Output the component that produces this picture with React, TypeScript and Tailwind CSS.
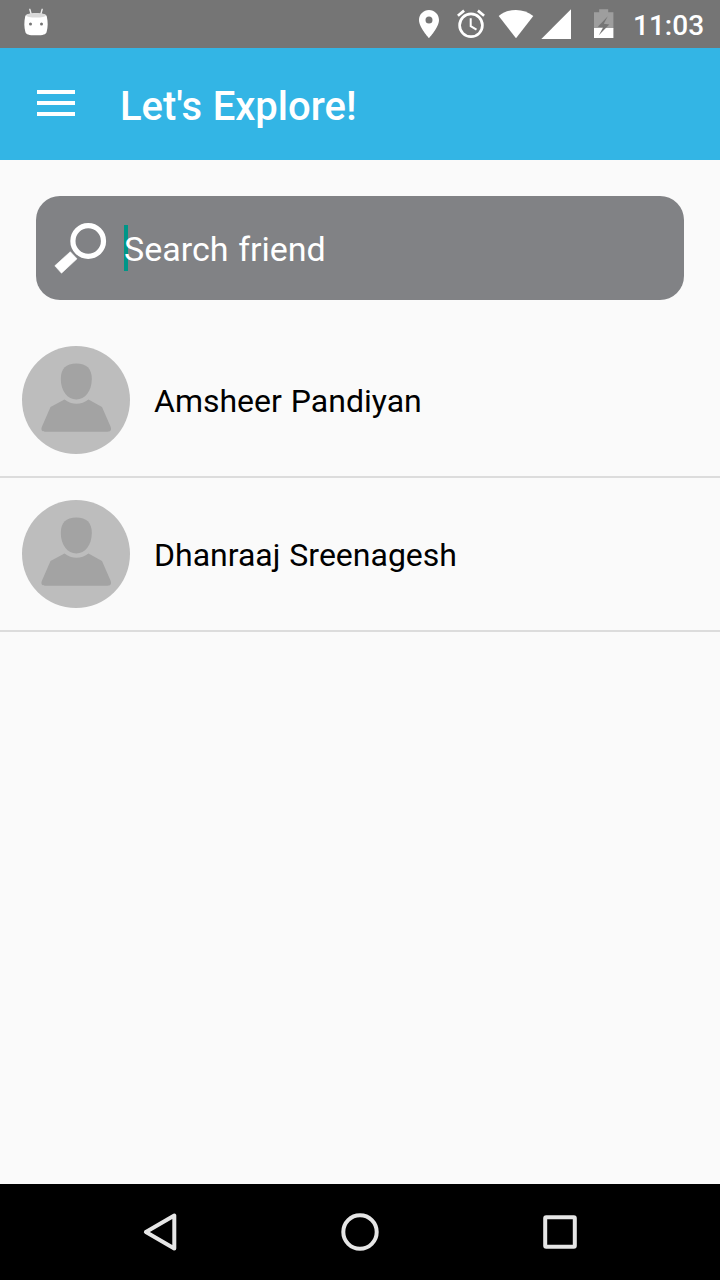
import React from 'react';

const friends = [
  { id: 1, name: 'Amsheer Pandiyan' },
  { id: 2, name: 'Dhanraaj Sreenagesh' },
];

const StatusBar: React.FC = () => (
  <div className="flex h-12 shrink-0 items-center bg-[#757575] text-white">
    {/* cyanogen notification */}
    <svg className="h-12 w-[72px]" viewBox="0 0 72 48">
      <path d="M29.8 9.3 31 13.5M42.2 9.3 41 13.5" stroke="#fff" strokeOpacity=".85" strokeWidth="1.4" strokeLinecap="round" />
      <path
        d="M25.2 16.5C25.2 12.2 46.8 12.2 46.8 16.5 48 22 48 27 46.6 32 45.8 34.6 43.5 35.3 36 35.3S26.2 34.6 25.4 32C24 27 24 22 25.2 16.5Z"
        fill="#fff"
      />
      <ellipse cx="36" cy="15.4" rx="10" ry="2.2" fill="#d9d9d9" />
      <circle cx="30.5" cy="24" r="1.5" fill="#757575" />
      <circle cx="41.5" cy="24" r="1.5" fill="#757575" />
    </svg>
    <div className="ml-auto flex items-center">
      <svg className="h-12 w-[38px]" viewBox="410 0 38 48">
        <path
          d="M429 10c-5.5 0-10 4.4-10 9.9C419 27.3 429 38 429 38s10-10.7 10-18.1c0-5.5-4.5-9.9-10-9.9zm0 13.4a3.5 3.5 0 1 1 0-7 3.5 3.5 0 0 1 0 7z"
          fill="#fff"
        />
      </svg>
      <svg className="h-12 w-[46px]" viewBox="448 0 46 48" fill="none" stroke="#fff">
        <circle cx="471" cy="25.3" r="11.4" strokeWidth="2.7" />
        <path d="M470.7 18.3V26.2L476.5 29.6" strokeWidth="2" />
        <path d="M457.9 15.8 464.1 10.6M484.1 15.8 477.9 10.6" strokeWidth="2.7" />
      </svg>
      <svg className="h-12 w-11" viewBox="494 0 44 48">
        <path d="M516 38.2 498.7 15.9C503.6 12 509.5 9.9 516 9.9S528.4 12 533.3 15.9Z" fill="#fff" />
      </svg>
      <svg className="h-12 w-[42px]" viewBox="538 0 42 48">
        <path d="M541.3 39H571V9.3Z" fill="#fff" />
      </svg>
      <svg className="h-12 w-[46px]" viewBox="580 0 46 48">
        <path d="M594 12.2h5.2V9.2h9v3h5.2V28.5H594z" fill="#9e9e9e" />
        <path d="M594 28h19.4v10H594z" fill="#fff" />
        <path d="M607.8 16.2 597.8 26.7 603.2 27.3 598.8 35.3 609.3 24.5 603.8 23.8Z" fill="#757575" />
      </svg>
      <span className="mt-[3px] w-[94px] pl-[7px] text-[28px] leading-none font-medium">11:03</span>
    </div>
  </div>
);

const AppBar: React.FC = () => (
  <header className="flex h-28 shrink-0 items-center bg-[#33b5e5] text-white">
    <button className="mb-[2px] ml-[37px] flex w-[38px] flex-col gap-[7px]" aria-label="Menu">
      <span className="h-1 w-full bg-white" />
      <span className="h-1 w-full bg-white" />
      <span className="h-1 w-full bg-white" />
    </button>
    <h1 className="mt-[5px] ml-[45px] text-[40px] leading-none font-medium [word-spacing:0.7px]">Let's Explore!</h1>
  </header>
);

const SearchBox: React.FC = () => (
  <div className="mx-9 mt-9 flex h-26 shrink-0 items-center rounded-[24px] bg-[#818285]">
    <svg className="ml-[18px] h-14 w-[70px]" viewBox="54 220 70 56">
      <circle cx="88.2" cy="241" r="15.3" fill="none" stroke="#fff" strokeWidth="5.2" />
      <path d="M70.3 251.7 77 258.8 61.5 273.2 54.8 265.8Z" fill="#fff" stroke="#fff" strokeWidth=".6" strokeLinejoin="round" />
    </svg>
    <div className="flex h-[46px] items-center">
      <span className="-mr-1 h-[46px] w-1 bg-[#009688]" />
      <span className="relative mt-px text-[34px] leading-none text-white [word-spacing:1.3px]">Search friend</span>
    </div>
  </div>
);

const Avatar: React.FC = () => (
  <svg className="size-[108px] shrink-0" viewBox="0 0 108 108">
    <circle cx="54" cy="54" r="54" fill="#bdbdbd" />
    <g fill="#a3a3a3">
      <path d="M54.3 17.5C64.5 17.5 69.8 22.5 69.8 33 69.8 45 63 53.5 54.3 53.5S38.8 45 38.8 33C38.8 22.5 44 17.5 54.3 17.5Z" />
      <path d="M42.5 53.5C49.5 59.2 59.5 59.2 66.5 53.5L80 61 88.5 80.5C90 84 88.3 85.7 85.5 85.7H23C20.2 85.7 18.5 84 20 80.5L28.5 61Z" />
    </g>
  </svg>
);

const FriendRow: React.FC<{ name: string }> = ({ name }) => (
  <li className="flex h-[154px] items-center gap-6 border-b-2 border-[#dcdcdc] pl-[22px]">
    <Avatar />
    <span className="mt-px text-[32px] leading-none text-black [word-spacing:1px]">{name}</span>
  </li>
);

const NavigationBar: React.FC = () => (
  <nav className="flex h-24 shrink-0 items-center justify-center bg-black">
    <svg className="h-24 w-[200px]" viewBox="60 1184 200 96">
      <path d="M174.3 1215.5V1248.5L145.9 1232Z" fill="none" stroke="#e6e6e6" strokeWidth="4" strokeLinejoin="round" />
    </svg>
    <svg className="h-24 w-[200px]" viewBox="260 1184 200 96">
      <circle cx="360" cy="1232" r="16.7" fill="none" stroke="#e6e6e6" strokeWidth="4" />
    </svg>
    <svg className="h-24 w-[200px]" viewBox="460 1184 200 96">
      <rect x="545.2" y="1217.2" width="29.6" height="29.6" rx="1" fill="none" stroke="#e6e6e6" strokeWidth="4" />
    </svg>
  </nav>
);

export default function App() {
  return (
    <div className="flex h-[1280px] w-[720px] flex-col overflow-hidden bg-[#fafafa] font-[Roboto,sans-serif]">
      <StatusBar />
      <AppBar />
      <main className="flex flex-1 flex-col">
        <SearchBox />
        <ul className="mt-6">
          {friends.map((friend) => (
            <FriendRow key={friend.id} name={friend.name} />
          ))}
        </ul>
      </main>
      <NavigationBar />
    </div>
  );
}
